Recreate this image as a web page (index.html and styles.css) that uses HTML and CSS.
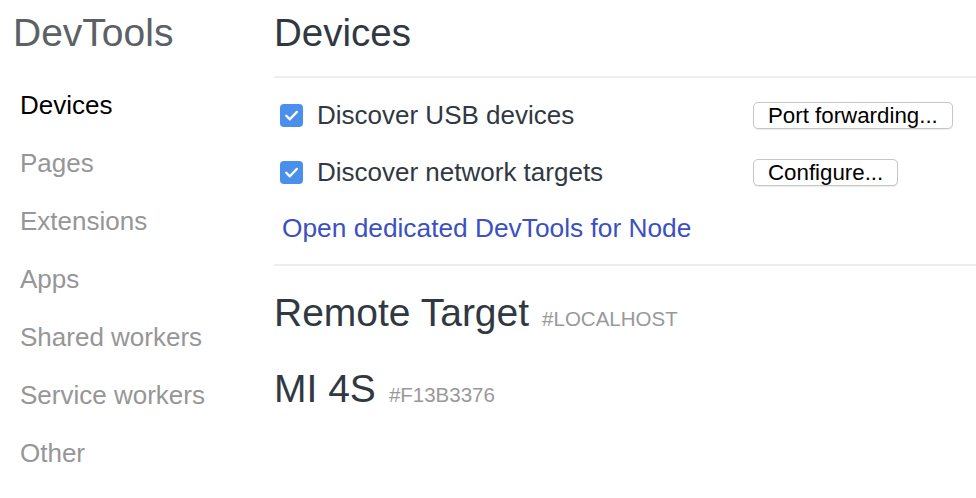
FILE: index.html
```html
<!DOCTYPE html>
<html>
<head>
<meta charset="utf-8">
<link rel="stylesheet" href="styles.css">
</head>
<body>
<div class="page">
  <nav class="sidebar">
    <div class="brand">DevTools</div>
    <ul class="nav">
      <li class="active">Devices</li>
      <li>Pages</li>
      <li>Extensions</li>
      <li>Apps</li>
      <li>Shared workers</li>
      <li>Service workers</li>
      <li>Other</li>
    </ul>
  </nav>
  <main class="content">
    <h1 class="heading">Devices</h1>
    <div class="options">
      <div class="row">
        <label class="check"><span class="box"><svg viewBox="0 0 24 24" width="23" height="23"><path d="M6.5 12.3 L10.3 16 L17.6 8.2" fill="none" stroke="#fff" stroke-width="2.4" stroke-linecap="round" stroke-linejoin="round"/></svg></span>Discover USB devices</label>
        <button class="btn">Port forwarding...</button>
      </div>
      <div class="row">
        <label class="check"><span class="box"><svg viewBox="0 0 24 24" width="23" height="23"><path d="M6.5 12.3 L10.3 16 L17.6 8.2" fill="none" stroke="#fff" stroke-width="2.4" stroke-linecap="round" stroke-linejoin="round"/></svg></span>Discover network targets</label>
        <button class="btn">Configure...</button>
      </div>
      <div class="linkrow"><a class="link">Open dedicated DevTools for Node</a></div>
    </div>
    <div class="targets">
      <div class="target"><span class="tname">Remote Target</span><span class="tid">#LOCALHOST</span></div>
      <div class="target"><span class="tname">MI 4S</span><span class="tid">#F13B3376</span></div>
    </div>
  </main>
</div>
</body>
</html>
```

FILE: styles.css
```css
* { box-sizing: border-box; }
html, body { margin: 0; padding: 0; background: #fff; }
body {
  font-family: "Liberation Sans", Arial, Helvetica, sans-serif;
  width: 976px;
  height: 498px;
  overflow: hidden;
}
.page { display: flex; }
.sidebar { width: 274px; flex: none; padding-top: 11px; }
.brand {
  font-size: 39px;
  line-height: 44px;
  color: #5c6166;
  padding-left: 13px;
}
.nav {
  list-style: none;
  margin: 21px 0 0 0;
  padding: 0 0 0 20px;
}
.nav li {
  font-size: 26px;
  line-height: 58px;
  color: #969696;
}
.nav li.active { color: #000; }
.content { flex: 1; padding-top: 11px; }
.heading {
  margin: 0;
  font-weight: normal;
  font-size: 38.5px;
  line-height: 44px;
  color: #303942;
}
.options {
  margin-top: 21px;
  border-top: 2px solid #eeeeee;
  border-bottom: 2px solid #eeeeee;
  padding-top: 9px;
  padding-bottom: 8px;
}
.row {
  display: grid;
  grid-template-columns: 479px auto;
  align-items: center;
  justify-items: start;
  height: 57px;
}
.check {
  display: flex;
  align-items: center;
  font-size: 26px;
  color: #303942;
  padding-left: 6px;
}
.box {
  width: 23px;
  height: 23px;
  border-radius: 4px;
  background: #4a8fec;
  margin-right: 14px;
  display: flex;
}
.btn {
  font-family: "Liberation Sans", Arial, sans-serif;
  font-size: 22.3px;
  height: 27px;
  line-height: 25px;
  padding: 0 14px;
  background: #fff;
  color: #000;
  border: 1px solid #c6c6c6;
  border-radius: 5px;
  box-shadow: 0 1px 1px rgba(0,0,0,0.08);
}
.linkrow {
  height: 55px;
  display: flex;
  align-items: center;
  padding-left: 8px;
}
.link {
  font-size: 26.3px;
  color: #3b50c3;
}
.targets { padding-top: 20px; }
.target {
  display: flex;
  align-items: baseline;
  height: 56px;
  line-height: 54px;
  margin-bottom: 20px;
}
.tname {
  font-size: 39px;
  color: #303942;
  margin-right: 13px;
}
.tid {
  font-size: 20.5px;
  color: #999;
}
```
